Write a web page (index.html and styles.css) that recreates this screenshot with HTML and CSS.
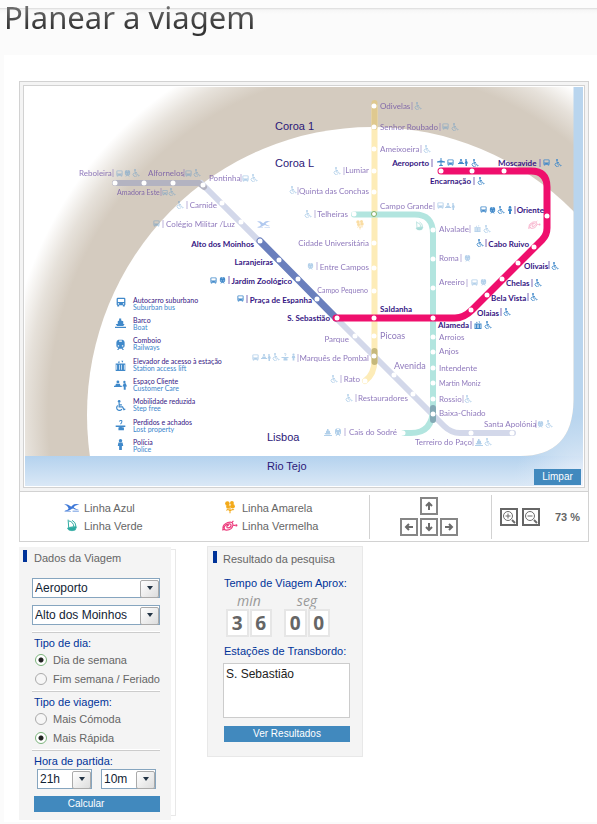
FILE: index.html
```html
<!DOCTYPE html>
<html lang="pt">
<head>
<meta charset="utf-8">
<title>Planear a viagem</title>
<link rel="stylesheet" href="styles.css">
</head>
<body>
<header class="page-head"><h1>Planear a viagem</h1></header>
<main class="sheet">
  <section class="planner">
    <div class="map-frame">
      <div class="map">
        <svg class="map-svg" viewBox="25 87 558 399" role="img" aria-label="Mapa do metro">
          <defs>
            <radialGradient id="ring" gradientUnits="userSpaceOnUse" cx="0" cy="0" r="368" gradientTransform="translate(372 415) scale(1 1.06)">
              <stop offset=".88" stop-color="#d4cbbf"/><stop offset=".94" stop-color="#e6e1da"/><stop offset="1" stop-color="#fff"/>
            </radialGradient>
            <linearGradient id="river" x1="0" y1="456" x2="0" y2="486" gradientUnits="userSpaceOnUse">
              <stop offset="0" stop-color="#b4d2ee"/><stop offset="1" stop-color="#dae8f6"/>
            </linearGradient>
            <radialGradient id="mouth" gradientUnits="userSpaceOnUse" cx="583" cy="486" r="70">
              <stop offset="0" stop-color="#f0f3fb"/><stop offset="1" stop-color="#dae8f6" stop-opacity="0"/>
            </radialGradient>
            <clipPath id="land"><path d="M25 87H573.500V400Q573 456 520 456H25Z"/></clipPath>
            <symbol id="bus" viewBox="0 0 16 16"><path fill-rule="evenodd" d="M3 1h10q2 0 2 2v9q0 1-1 1v2h-3v-2H5v2H2v-2q-1 0-1-1V3q0-2 2-2Zm0 2v5h10V3Zm0 7v2h2v-2Zm8 0v2h2v-2Z"/></symbol>
            <symbol id="train" viewBox="0 0 16 16"><path fill-rule="evenodd" d="M5 1h6q3 1 3 4v5q0 2-3 3l2 3h-2l-1-2H6l-1 2H3l2-3q-3-1-3-3V5q0-3 3-4Zm1 1v2h4V2Zm-2 7v2h2V9Zm6 0v2h2V9Z"/></symbol>
            <symbol id="wheel" viewBox="0 0 16 16"><circle cx="6" cy="2" r="2"/><path d="M6 4v6h5l2 4 2-1M6 7h4M4 8a4 4 0 1 0 6 5" fill="none" stroke="currentColor" stroke-width="1.700"/></symbol>
            <symbol id="lift" viewBox="0 0 16 16"><path fill-rule="evenodd" d="M1 5h14v11H1Zm1 2v7h1V7Zm4 0v7h1V7Zm3 0v7h1V7Zm4 0v7h1V7ZM4 4l2-3 1 3Zm5-3h3l-1 3Z"/></symbol>
            <symbol id="care" viewBox="0 0 20 16"><circle cx="6" cy="4" r="2.200"/><path d="M3 7h6l1 3h2v2H0v-2h2Zm12-1h3l2 5h-2v5h-3v-5h-2Z"/><circle cx="16" cy="4" r="1.800"/></symbol>
            <symbol id="boat" viewBox="0 0 16 16"><path d="M6 2h3v3l3 1v4h2l-2 3H3l-2-3h3V6l2-1ZM0 14h16v2H0Z"/></symbol>
            <symbol id="lost" viewBox="0 0 16 16"><path d="M6 2q4-3 4 0 0 2-2 4" fill="none" stroke="currentColor" stroke-width="1.500"/><path d="M1 8h14v2H9l4 1v4H5v-4l2-1H1Z"/></symbol>
            <symbol id="police" viewBox="0 0 16 16"><circle cx="8" cy="2.500" r="2.500"/><path d="M5 5h6l1 5h-2v6H6v-6H4Z"/></symbol>
            <symbol id="plane" viewBox="0 0 16 16"><path d="M7 0h2v5l7 2v2H9v4l3 2v1H4v-1l3-2V9H0V7l7-2Z"/></symbol>
            <symbol id="gull" viewBox="0 0 28 16"><path d="M0 2q6-2 10 2 3 3 5-1 4-3 12-1-8 1-10 5 4 3 9 4-6 1-10-2-4 1-6 3-4 2-9 1 6-1 7-4Q6 3 0 2Zm1 12h11v1H1Zm14-1h11v1H15Z"/></symbol>
            <symbol id="ship" viewBox="0 0 16 20"><path fill="none" stroke="currentColor" stroke-width="1.500" d="M2 1l1 13M3 3q7 1 8 9L4 13M8 2q6 3 6 9l-3 2"/><path fill="currentColor" stroke="currentColor" d="M1 14l14-2-2 5q-5 2-10 0Z"/></symbol>
            <symbol id="flower" viewBox="0 0 16 20"><circle cx="4" cy="4" r="3.500"/><circle cx="11" cy="3" r="3"/><circle cx="12" cy="8" r="3.500"/><circle cx="5" cy="9" r="3"/><path fill="none" stroke="currentColor" stroke-width="1.600" d="M8 7v12M8 15q-5-4-5 0m5 0q5-3 6-1"/></symbol>
            <symbol id="rose" viewBox="0 0 28 20"><g fill="none" stroke="currentColor" stroke-width="2"><path d="M2 16q-2-8 8-12 10-3 9 5-2 9-13 8-5-4 1-9 9-4 9 1-1 5-7 4-2-3 3-5M20 9h3M18 3l2-2M0 17l5-1"/></g><circle cx="25" cy="9" r="2"/></symbol>
          </defs>
          <rect x="25" y="87" width="558" height="399" fill="#b9d5ee"/>
          <rect x="25" y="456" width="558" height="30" fill="url(#river)"/>
          <circle cx="583" cy="486" r="70" fill="url(#mouth)"/>
          <g clip-path="url(#land)">
            <rect x="25" y="87" width="549" height="370" fill="url(#ring)"/>
            <ellipse cx="372" cy="415" rx="285" ry="288" fill="#fff"/>
          </g>

          <g class="track">
            <path stroke="#d3d8ea" d="M201 183L336 318L444 426Q451 433 460 433H513"/>
            <path stroke="#b3b3c1" d="M115 183H199L204 187"/>
            <path stroke="#fdecb8" d="M374.500 106V358Q375 374 365 381"/>
            <path stroke="#dfc98f" stroke-linecap="butt" d="M374.500 103V127"/>
            <path stroke="#b2e5df" d="M354 214.500H414Q433 214 433 234V408Q433 433 411 433H404"/>
            <path stroke="#c6b87b" stroke-linecap="butt" d="M374.500 351V362"/>
            <path stroke="#83a9b5" stroke-linecap="butt" d="M433 408V420"/>
            <path class="on" stroke="#6a7fbd" d="M260 241L336 318"/>
            <path class="on" stroke="#ef0f6d" d="M441 171H531Q547 171 547 187V228Q547 235 542 240L472 310Q464 318 455 318H336"/>
          </g>
          <g class="stops">
            <circle cx="115" cy="183" r="2.500"/><circle cx="144" cy="183" r="2.500"/><circle cx="173" cy="183" r="2.500"/><circle cx="203" cy="185" r="2.500"/><circle cx="222" cy="203" r="2.500"/><circle cx="241" cy="222" r="2.500"/><circle cx="260" cy="241" r="2.500"/><circle cx="279" cy="260" r="2.500"/><circle cx="298" cy="279" r="2.500"/><circle cx="317" cy="299" r="2.500"/><circle cx="337" cy="318" r="2.500"/><circle cx="355" cy="336" r="2.500"/><circle cx="374" cy="356" r="2.500"/><circle cx="394" cy="375" r="2.500"/><circle cx="413" cy="394" r="2.500"/><circle cx="433" cy="414" r="2.500"/><circle cx="471" cy="433" r="2.500"/><circle cx="512" cy="433" r="2.500"/>
            <circle cx="374" cy="106" r="2.500"/><circle cx="374" cy="127" r="2.500"/><circle cx="374" cy="149" r="2.500"/><circle cx="374" cy="171" r="2.500"/><circle cx="374" cy="192" r="2.500"/><circle cx="374" cy="214" r="2.500" stroke="#85ae61"/><circle cx="374" cy="243" r="2.500"/><circle cx="374" cy="268" r="2.500"/><circle cx="374" cy="291" r="2.500"/><circle cx="374" cy="318" r="2.500"/><circle cx="374" cy="336" r="2.500"/><circle cx="365" cy="381" r="2.500"/>
            <circle cx="354" cy="214" r="2.500"/><circle cx="433" cy="230" r="2.500"/><circle cx="433" cy="259" r="2.500"/><circle cx="433" cy="288" r="2.500"/><circle cx="433" cy="318" r="2.500"/><circle cx="433" cy="337" r="2.500"/><circle cx="433" cy="352" r="2.500"/><circle cx="433" cy="368" r="2.500"/><circle cx="433" cy="383" r="2.500"/><circle cx="433" cy="399" r="2.500"/><circle cx="403" cy="433" r="2.500"/>
            <circle cx="441" cy="171" r="2.500"/><circle cx="472" cy="171" r="2.500"/><circle cx="504" cy="171" r="2.500"/><circle cx="547" cy="216" r="2.500"/><circle cx="534" cy="247" r="2.500"/><circle cx="518" cy="263" r="2.500"/><circle cx="502" cy="279" r="2.500"/><circle cx="487" cy="295" r="2.500"/><circle cx="471" cy="310" r="2.500"/>
          </g>

          <g class="zone">
            <text x="275" y="130">Coroa 1</text><text x="275" y="167">Coroa L</text><text x="267" y="441">Lisboa</text><text x="267" y="470">Rio Tejo</text>
          </g>

          <g class="name off">
            <text x="380" y="109">Odivelas</text><text x="380" y="130">Senhor Roubado</text><text x="380" y="152">Ameixoeira</text>
            <text class="end" x="369" y="173">Lumiar</text><text class="end" x="369" y="194">Quinta das Conchas</text><text class="end" x="348" y="217">Telheiras</text>
            <text x="380" y="209">Campo Grande</text><text x="439" y="232">Alvalade</text><text class="end" x="369" y="246">Cidade Universitária</text>
            <text x="439" y="261">Roma</text><text class="end" x="369" y="270">Entre Campos</text><text x="439" y="285">Areeiro</text><text class="end small" x="368" y="293">Campo Pequeno</text>
            <text class="large" x="380" y="339">Picoas</text><text x="439" y="340">Arroios</text><text x="439" y="354">Anjos</text><text class="end" x="349" y="342">Parque</text>
            <text class="end" x="369" y="361">Marquês de Pombal</text><text class="large" x="394" y="369">Avenida</text><text x="439" y="371">Intendente</text>
            <text class="end" x="360" y="382">Rato</text><text class="small" x="439" y="386">Martin Moniz</text><text class="end" x="408" y="401">Restauradores</text>
            <text x="439" y="402">Rossio</text><text x="439" y="416">Baixa-Chiado</text><text class="end" x="397" y="435">Cais do Sodré</text>
            <text x="484" y="427">Santa Apolónia</text><text x="415" y="445">Terreiro do Paço</text>
            <text x="79" y="176">Reboleira</text><text x="148" y="176">Alfornelos</text><text class="small" x="117" y="195">Amadora Este</text><text x="209" y="181">Pontinha</text>
            <text class="end" x="217" y="208">Carnide</text><text class="end" x="235" y="227">Colégio Militar /Luz</text>
          </g>
          <g class="name">
            <text class="end" x="254" y="247">Alto dos Moinhos</text><text class="end" x="273" y="265">Laranjeiras</text><text class="end" x="292" y="284">Jardim Zoológico</text>
            <text class="end" x="312" y="303">Praça de Espanha</text><text class="end" x="330" y="321">S. Sebastião</text><text x="380" y="312">Saldanha</text>
            <text class="end" x="429" y="166">Aeroporto</text><text x="498" y="166">Moscavide</text><text x="430" y="184">Encarnação</text><text class="end" x="544" y="213">Oriente</text>
            <text class="end" x="529" y="247">Cabo Ruivo</text><text x="524" y="269">Olivais</text><text x="506" y="286">Chelas</text><text x="491" y="301">Bela Vista</text><text x="477" y="316">Olaias</text><text x="438" y="328">Alameda</text>
          </g>

          <path class="bar off" d="M412 102v8M440 123v8M421 145v8M344 167v8M298 187v8M315 210v8M434 202v8M470 225v8M461 254v8M317 262v8M467 279v8M298 354v8M341 375v8M356 394v8M463 395v8M345 428v8M536 420v8M473 438v8M113 169v8M184 169v8M161 188v8M241 174v8M187 201v8M163 220v8"/>
          <path class="bar" d="M432 159v8M540 159v8M474 177v8M515 206v8M486 239v8M549 261v8M532 279v8M528 293v8M501 308v8M471 321v8M229 276v8M247 295v8"/>

          <g class="glyph off">
            <use href="#wheel" x="414" y="102" width="8" height="8"/>
            <use href="#bus" x="442" y="123" width="7" height="7"/><use href="#wheel" x="451" y="123" width="8" height="8"/>
            <use href="#wheel" x="423" y="145" width="8" height="8"/><use href="#wheel" x="333" y="167" width="8" height="8"/><use href="#wheel" x="289" y="186" width="8" height="8"/><use href="#wheel" x="304" y="210" width="8" height="8"/>
            <use href="#bus" x="437" y="202" width="7" height="7"/><use href="#care" x="445" y="202" width="10" height="8"/>
            <use href="#lift" x="474" y="225" width="7" height="7"/><use href="#wheel" x="483" y="225" width="8" height="8"/>
            <use href="#train" x="307" y="262" width="7" height="8"/><use href="#train" x="464" y="254" width="7" height="8"/>
            <use href="#bus" x="471" y="279" width="7" height="7"/><use href="#train" x="480" y="278" width="7" height="8"/>
            <use href="#bus" x="252" y="354" width="7" height="7"/><use href="#care" x="261" y="353" width="10" height="8"/><use href="#wheel" x="272" y="353" width="8" height="8"/><use href="#lost" x="281" y="353" width="8" height="8"/><use href="#police" x="290" y="353" width="7" height="8"/>
            <use href="#wheel" x="330" y="375" width="8" height="8"/><use href="#wheel" x="345" y="394" width="8" height="8"/><use href="#wheel" x="464" y="395" width="8" height="8"/>
            <use href="#boat" x="324" y="428" width="8" height="8"/><use href="#train" x="334" y="428" width="8" height="8"/>
            <use href="#train" x="537" y="420" width="7" height="8"/><use href="#wheel" x="545" y="420" width="8" height="8"/>
            <use href="#boat" x="475" y="438" width="8" height="8"/><use href="#wheel" x="484" y="438" width="8" height="8"/>
            <use href="#bus" x="116" y="170" width="7" height="7"/><use href="#train" x="124" y="169" width="7" height="8"/><use href="#wheel" x="132" y="169" width="8" height="8"/>
            <use href="#bus" x="185" y="170" width="7" height="7"/><use href="#wheel" x="193" y="169" width="8" height="8"/>
            <use href="#bus" x="162" y="189" width="6" height="7"/><use href="#wheel" x="168" y="188" width="8" height="8"/>
            <use href="#bus" x="242" y="175" width="7" height="7"/><use href="#wheel" x="250" y="174" width="8" height="8"/>
            <use href="#wheel" x="176" y="201" width="8" height="8"/><use href="#bus" x="153" y="220" width="7" height="7"/>
            <use class="azul" href="#gull" x="257" y="220" width="14" height="9"/><use class="amarela" href="#flower" x="356" y="220" width="8" height="10"/><use class="verde" href="#ship" x="415" y="221" width="9" height="10"/><use class="vermelha" href="#rose" x="528" y="220" width="13" height="10"/>
          </g>
          <g class="glyph">
            <use href="#plane" x="437" y="158" width="8" height="8"/><use href="#bus" x="447" y="159" width="7" height="7"/><use href="#care" x="458" y="158" width="10" height="8"/><use href="#wheel" x="471" y="159" width="8" height="8"/>
            <use href="#bus" x="543" y="159" width="7" height="7"/><use href="#wheel" x="554" y="159" width="8" height="8"/><use href="#wheel" x="477" y="177" width="8" height="8"/>
            <use href="#bus" x="480" y="206" width="7" height="7"/><use href="#train" x="489" y="206" width="7" height="8"/><use href="#wheel" x="497" y="206" width="8" height="8"/><use href="#police" x="506" y="206" width="8" height="8"/>
            <use href="#wheel" x="476" y="239" width="8" height="8"/><use href="#wheel" x="551" y="262" width="8" height="8"/><use href="#wheel" x="534" y="279" width="8" height="8"/><use href="#wheel" x="530" y="293" width="8" height="8"/><use href="#wheel" x="503" y="308" width="8" height="8"/>
            <use href="#lift" x="474" y="321" width="8" height="8"/><use href="#wheel" x="484" y="321" width="8" height="8"/>
            <use href="#bus" x="210" y="277" width="7" height="7"/><use href="#train" x="219" y="276" width="7" height="8"/><use href="#bus" x="237" y="295" width="7" height="7"/>
            <use href="#bus" x="116" y="297" width="10" height="10"/><use href="#boat" x="115" y="317" width="11" height="11"/><use href="#train" x="115" y="339" width="11" height="11"/><use href="#lift" x="115" y="360" width="11" height="11"/><use href="#care" x="114" y="379" width="13" height="11"/><use href="#wheel" x="115" y="400" width="11" height="11"/><use href="#lost" x="115" y="420" width="11" height="11"/><use href="#police" x="115" y="439" width="11" height="11"/>
          </g>
          <g class="key">
            <text x="133" y="303">Autocarro suburbano</text><text class="en" x="133" y="310">Suburban bus</text>
            <text x="133" y="323">Barco</text><text class="en" x="133" y="330">Boat</text>
            <text x="133" y="343">Comboio</text><text class="en" x="133" y="350">Railways</text>
            <text x="133" y="364">Elevador de acesso à estação</text><text class="en" x="133" y="371">Station access lift</text>
            <text x="133" y="384">Espaço Cliente</text><text class="en" x="133" y="391">Customer Care</text>
            <text x="133" y="404">Mobilidade reduzida</text><text class="en" x="133" y="411">Step free</text>
            <text x="133" y="425">Perdidos e achados</text><text class="en" x="133" y="432">Lost property</text>
            <text x="133" y="445">Polícia</text><text class="en" x="133" y="452">Police</text>
          </g>
        </svg>
        <button class="action clear" type="button">Limpar</button>
      </div>
    </div>
    <div class="toolbar">
      <ul class="lines">
        <li><svg class="azul" width="16" height="10"><use href="#gull"/></svg>Linha Azul</li>
        <li><svg class="amarela" width="16" height="13"><use href="#flower"/></svg>Linha Amarela</li>
        <li><svg class="verde" width="16" height="13"><use href="#ship"/></svg>Linha Verde</li>
        <li><svg class="vermelha" width="16" height="12"><use href="#rose"/></svg>Linha Vermelha</li>
      </ul>
      <div class="pan">
        <button class="square up" type="button" aria-label="Cima"><svg viewBox="0 0 14 14"><path d="M7 11V4M4 7l3-3 3 3"/></svg></button>
        <button class="square" type="button" aria-label="Esquerda"><svg viewBox="0 0 14 14"><path d="M11 7H4M7 4L4 7l3 3"/></svg></button>
        <button class="square" type="button" aria-label="Baixo"><svg viewBox="0 0 14 14"><path d="M7 3v7M4 7l3 3 3-3"/></svg></button>
        <button class="square" type="button" aria-label="Direita"><svg viewBox="0 0 14 14"><path d="M3 7h7M7 4l3 3-3 3"/></svg></button>
      </div>
      <div class="zoom">
        <button class="square dark" type="button" aria-label="Aumentar"><svg viewBox="0 0 14 14"><circle class="thin" cx="6" cy="6" r="4.500"/><path d="M10 10l3 3"/><path class="thin" d="M3.500 6h5M6 3.500v5"/></svg></button>
        <button class="square dark" type="button" aria-label="Diminuir"><svg viewBox="0 0 14 14"><circle class="thin" cx="6" cy="6" r="4.500"/><path d="M10 10l3 3"/><path class="thin" d="M3.500 6h5"/></svg></button>
        <output>73 %</output>
      </div>
    </div>
  </section>

  <div class="panels">
    <form class="panel trip">
      <h2>Dados da Viagem</h2>
      <div class="pick"><select aria-label="Origem"><option>Aeroporto</option></select></div>
      <div class="pick"><select aria-label="Destino"><option>Alto dos Moinhos</option></select></div>
      <fieldset>
        <legend>Tipo de dia:</legend>
        <label><input type="radio" name="dia" checked>Dia de semana</label>
        <label><input type="radio" name="dia">Fim semana / Feriado</label>
      </fieldset>
      <fieldset>
        <legend>Tipo de viagem:</legend>
        <label><input type="radio" name="viagem">Mais Cómoda</label>
        <label><input type="radio" name="viagem" checked>Mais Rápida</label>
      </fieldset>
      <fieldset class="depart">
        <legend>Hora de partida:</legend>
        <div class="time">
          <div class="pick"><select aria-label="Hora"><option>21h</option></select></div>
          <div class="pick"><select aria-label="Minutos"><option>10m</option></select></div>
        </div>
      </fieldset>
      <button class="action calc" type="button">Calcular</button>
    </form>

    <section class="panel result">
      <h2>Resultado da pesquisa</h2>
      <h3>Tempo de Viagem Aprox:</h3>
      <div class="clock">
        <div class="unit"><span class="label">min</span><span class="digits"><b>3</b><b>6</b></span></div>
        <div class="unit"><span class="label">seg</span><span class="digits"><b>0</b><b>0</b></span></div>
      </div>
      <h3><label for="transfer">Estações de Transbordo:</label></h3>
      <textarea id="transfer" readonly>S. Sebastião</textarea>
      <button class="action" type="button">Ver Resultados</button>
    </section>
  </div>
</main>
</body>
</html>
```
FILE: styles.css
```css
* { box-sizing: border-box; }
body {
  margin: 0;
  background: #fbfbfb;
  font: 11px/18px "Liberation Sans", Arial, sans-serif;
  color: #666;
}
h1, h2, h3, ul, fieldset { margin: 0; padding: 0; border: 0; font-weight: normal; }
button, select, textarea { font-family: inherit; margin: 0; }

.page-head {
  height: 55px;
  padding-left: 4px;
  background: linear-gradient(#fcfcfc 8px, #d9d9d9 8px, #e9e9e9 9px, #f6f6f6 10px, #fbfbfb 14px);
}
.page-head h1 {
  display: inline-block;
  padding-bottom: 8px;
  font: 31px/34px "Noto Sans", sans-serif;
  background: linear-gradient(#777 4px, #333 28px);
  background-clip: text;
  color: transparent;
}
.sheet { margin-left: 4px; padding: 26px 8px 2px 15px; background: #fff; }

.planner { border: 1px solid #d2d2d2; }
.map-frame { padding: 3px; background: #f4f4f4; border-bottom: 1px solid #d2d2d2; }
.map { position: relative; padding: 1px; border: 1px solid #d2d2d2; background: #fff; }
.map-svg { display: block; width: 100%; height: auto; }
.clear { position: absolute; right: 3px; bottom: 2px; width: 47px; }

.track path { fill: none; stroke-width: 6px; stroke-linecap: round; }
.track .on { stroke-width: 7px; }
.stops { fill: #fff; }
.zone { font: 11px "Liberation Sans", sans-serif; fill: #2b1878; }
.name { font: bold 8px Lato, sans-serif; fill: #351583; }
.name.off { font-weight: normal; fill: #6040a0; opacity: .7; }
.end { text-anchor: end; }
.small { font-size: 7px; }
.large { font-size: 9px; }
.bar { stroke: #7e6bb5; stroke-width: 1px; }
.bar.off { opacity: .5; }
.glyph { fill: currentColor; color: #4089ca; }
.glyph.off { opacity: .4; }
.key { font: 7px Lato, sans-serif; fill: #351583; }
.key .en { fill: #3c86cc; }

.azul { color: #3e78d8; fill: currentColor; }
.verde { color: #2caaa0; fill: currentColor; }
.amarela { color: #f3aa1a; fill: currentColor; }
.vermelha { color: #ec3b7c; fill: currentColor; }

.action {
  height: 16px;
  padding: 0;
  border: 0;
  background: #4189be;
  color: #fff;
  font-size: 10px;
  line-height: 16px;
}

.toolbar { display: grid; grid-template-columns: 1fr 122px 97px; height: 49px; }
.lines {
  display: grid;
  grid-template-columns: 158px 1fr;
  align-content: center;
  padding-left: 44px;
  list-style: none;
}
.lines li { display: flex; align-items: center; gap: 4px; }
.pan, .zoom { display: flex; align-items: center; margin: 3px 0 2px; border-left: 1px solid #d2d2d2; }
.pan {
  display: grid;
  grid-template-columns: repeat(3, 18px);
  gap: 3px 2px;
  justify-content: center;
  align-content: center;
  padding: 0 4px 2px 0;
}
.up { grid-column: 2; }
.up + .square { grid-column: 1; }
.square { width: 18px; height: 18px; padding: 0; border: 2px solid #868686; background: #fff; }
.square.dark { border-color: #666; }
.square svg { display: block; width: 14px; height: 14px; fill: none; stroke: #6b6b6b; stroke-width: 2px; }
.square .thin { stroke-width: 1px; }
.zoom { gap: 4px; padding-left: 8px; }
.zoom output { margin-left: 11px; font-weight: bold; }

.panels { display: flex; align-items: flex-start; gap: 36px; padding-top: 4px; }
.panel { position: relative; background: #f4f4f4; }
.panel h2 { font-size: 11px; line-height: 12px; border-left: 4px solid #039; }
.trip { width: 152px; margin-top: 1px; padding: 3px 11px 8px 13px; z-index: 0; }
.trip::before {
  content: "";
  position: absolute;
  z-index: -1;
  inset: 2px -5px 4px 152px;
  border: 1px solid #e8e8e8;
  border-left: 0;
}
.trip h2 { height: 12px; margin: 0 0 16px -9px; padding: 2px 0 0 7px; }
.pick { position: relative; height: 20px; margin-bottom: 7px; }
.pick select {
  display: block;
  width: 100%;
  height: 20px;
  padding: 0 20px 0 2px;
  border: 1px solid #86a5bf;
  border-radius: 0;
  appearance: none;
  background: #fff;
  color: #123;
  font-size: 12px;
}
.pick::before {
  content: "";
  position: absolute;
  right: 1px;
  top: 2px;
  width: 17px;
  height: 16px;
  border: 1px solid #aaa;
  border-radius: 2px;
  background: linear-gradient(135deg, #fff, #ddd);
  pointer-events: none;
}
.pick::after {
  content: "";
  position: absolute;
  right: 7px;
  top: 8px;
  border: 3px solid transparent;
  border-top: 4px solid #234;
  border-bottom: 0;
  pointer-events: none;
}
fieldset { padding-bottom: 3px; border-top: 1px solid #ccc; box-shadow: 0 -1px #fff; min-width: 0; }
.depart { padding-bottom: 0; }
legend { float: left; width: 100%; padding: 2px 0 0 2px; line-height: 16px; color: #039; }
fieldset label { display: flex; align-items: center; gap: 6px; clear: both; height: 18px; padding-left: 3px; white-space: nowrap; }
fieldset label:last-child { height: 19px; }
input[type="radio"] {
  appearance: none;
  width: 12px;
  height: 12px;
  margin: 0;
  border: 1px solid #aaa;
  border-radius: 50%;
  background: #f6f6f6;
}
input[type="radio"]:checked { border-color: #7cb47c; background: radial-gradient(#222 2px, #fff 3px); }
.time { display: grid; grid-template-columns: 55px 55px; gap: 9px; clear: both; padding-left: 5px; }
.calc { display: block; width: 126px; margin-left: 2px; padding-right: 22px; }

.result { width: 156px; padding: 4px 12px 14px 15px; border: 1px solid #e8e8e8; }
.result h2 { height: 12px; margin: 0 0 11px -10px; padding: 2px 0 0 6px; }
.result h3 { padding-left: 1px; font-size: 11px; line-height: 18px; color: #039; white-space: nowrap; }
.clock { display: flex; gap: 12px; padding-left: 3px; }
.unit { width: 46px; margin-bottom: 5px; }
.label { display: block; text-align: center; font: italic 14px/17px "Open Sans", sans-serif; color: #999; }
.digits { display: grid; grid-template-columns: 1fr 1fr; gap: 1px; }
.digits b {
  height: 28px;
  border: 2px solid #e6e6e6;
  background: #fff;
  font: bold 19px/25px "Open Sans", sans-serif;
  text-align: center;
}
.result textarea {
  display: block;
  width: 127px;
  height: 55px;
  margin: 3px 0 8px;
  padding: 2px;
  border: 1px solid #ccc;
  background: #fff;
  resize: none;
  overflow: hidden;
  color: #222;
  font: 12px/16px "Liberation Sans Narrow", "Liberation Sans", sans-serif;
}
.result .action { display: block; width: 126px; margin-left: 1px; }
```
